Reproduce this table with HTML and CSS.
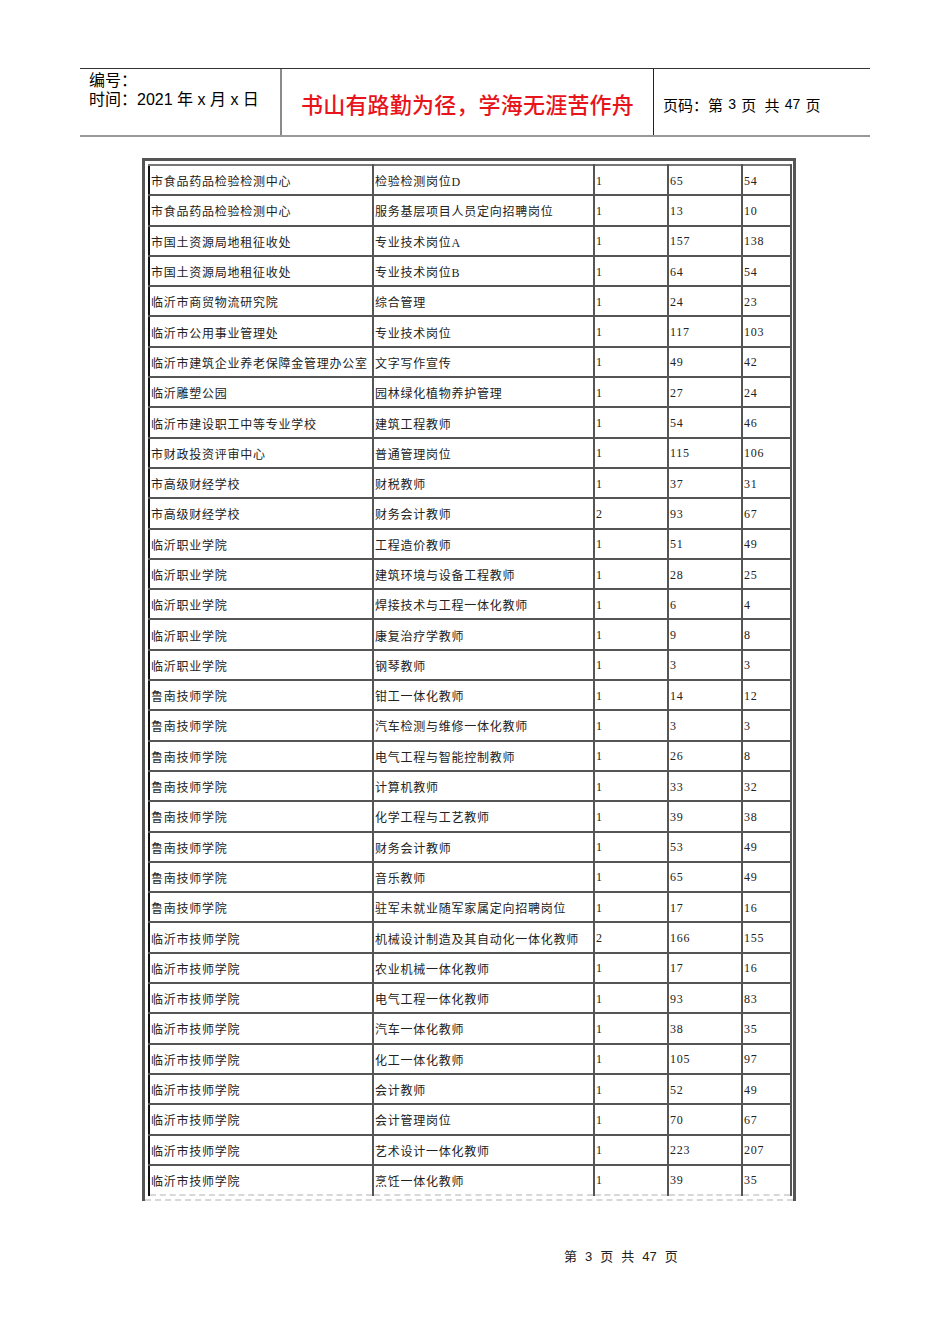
FILE: index.html
```html
<!DOCTYPE html>
<html lang="zh">
<head>
<meta charset="utf-8">
<title>第3页</title>
<link rel="stylesheet" href="styles.css">
</head>
<body>
<div class="header">
  <div class="h-left">
    <div>编号：</div>
    <div>时间：2021 年 x 月 x 日</div>
  </div>
  <div class="h-mid">书山有路勤为径，学海无涯苦作舟</div>
  <div class="h-right">页码：第 <span class="num">3</span> 页&nbsp;&nbsp;共 <span class="num">47</span> 页</div>
</div>

<div class="sheet">
  <table class="grid">
    <colgroup>
      <col class="c1"><col class="c2"><col class="c3"><col class="c4"><col class="c5">
    </colgroup>
    <tbody>
      <tr><td>市食品药品检验检测中心</td><td>检验检测岗位D</td><td>1</td><td>65</td><td>54</td></tr>
      <tr><td>市食品药品检验检测中心</td><td>服务基层项目人员定向招聘岗位</td><td>1</td><td>13</td><td>10</td></tr>
      <tr><td>市国土资源局地租征收处</td><td>专业技术岗位A</td><td>1</td><td>157</td><td>138</td></tr>
      <tr><td>市国土资源局地租征收处</td><td>专业技术岗位B</td><td>1</td><td>64</td><td>54</td></tr>
      <tr><td>临沂市商贸物流研究院</td><td>综合管理</td><td>1</td><td>24</td><td>23</td></tr>
      <tr><td>临沂市公用事业管理处</td><td>专业技术岗位</td><td>1</td><td>117</td><td>103</td></tr>
      <tr><td>临沂市建筑企业养老保障金管理办公室</td><td>文字写作宣传</td><td>1</td><td>49</td><td>42</td></tr>
      <tr><td>临沂雕塑公园</td><td>园林绿化植物养护管理</td><td>1</td><td>27</td><td>24</td></tr>
      <tr><td>临沂市建设职工中等专业学校</td><td>建筑工程教师</td><td>1</td><td>54</td><td>46</td></tr>
      <tr><td>市财政投资评审中心</td><td>普通管理岗位</td><td>1</td><td>115</td><td>106</td></tr>
      <tr><td>市高级财经学校</td><td>财税教师</td><td>1</td><td>37</td><td>31</td></tr>
      <tr><td>市高级财经学校</td><td>财务会计教师</td><td>2</td><td>93</td><td>67</td></tr>
      <tr><td>临沂职业学院</td><td>工程造价教师</td><td>1</td><td>51</td><td>49</td></tr>
      <tr><td>临沂职业学院</td><td>建筑环境与设备工程教师</td><td>1</td><td>28</td><td>25</td></tr>
      <tr><td>临沂职业学院</td><td>焊接技术与工程一体化教师</td><td>1</td><td>6</td><td>4</td></tr>
      <tr><td>临沂职业学院</td><td>康复治疗学教师</td><td>1</td><td>9</td><td>8</td></tr>
      <tr><td>临沂职业学院</td><td>钢琴教师</td><td>1</td><td>3</td><td>3</td></tr>
      <tr><td>鲁南技师学院</td><td>钳工一体化教师</td><td>1</td><td>14</td><td>12</td></tr>
      <tr><td>鲁南技师学院</td><td>汽车检测与维修一体化教师</td><td>1</td><td>3</td><td>3</td></tr>
      <tr><td>鲁南技师学院</td><td>电气工程与智能控制教师</td><td>1</td><td>26</td><td>8</td></tr>
      <tr><td>鲁南技师学院</td><td>计算机教师</td><td>1</td><td>33</td><td>32</td></tr>
      <tr><td>鲁南技师学院</td><td>化学工程与工艺教师</td><td>1</td><td>39</td><td>38</td></tr>
      <tr><td>鲁南技师学院</td><td>财务会计教师</td><td>1</td><td>53</td><td>49</td></tr>
      <tr><td>鲁南技师学院</td><td>音乐教师</td><td>1</td><td>65</td><td>49</td></tr>
      <tr><td>鲁南技师学院</td><td>驻军未就业随军家属定向招聘岗位</td><td>1</td><td>17</td><td>16</td></tr>
      <tr><td>临沂市技师学院</td><td>机械设计制造及其自动化一体化教师</td><td>2</td><td>166</td><td>155</td></tr>
      <tr><td>临沂市技师学院</td><td>农业机械一体化教师</td><td>1</td><td>17</td><td>16</td></tr>
      <tr><td>临沂市技师学院</td><td>电气工程一体化教师</td><td>1</td><td>93</td><td>83</td></tr>
      <tr><td>临沂市技师学院</td><td>汽车一体化教师</td><td>1</td><td>38</td><td>35</td></tr>
      <tr><td>临沂市技师学院</td><td>化工一体化教师</td><td>1</td><td>105</td><td>97</td></tr>
      <tr><td>临沂市技师学院</td><td>会计教师</td><td>1</td><td>52</td><td>49</td></tr>
      <tr><td>临沂市技师学院</td><td>会计管理岗位</td><td>1</td><td>70</td><td>67</td></tr>
      <tr><td>临沂市技师学院</td><td>艺术设计一体化教师</td><td>1</td><td>223</td><td>207</td></tr>
      <tr class="last"><td>临沂市技师学院</td><td>烹饪一体化教师</td><td>1</td><td>39</td><td>35</td></tr>
    </tbody>
  </table>
</div>

<div class="footer">
  <span>第</span><span class="num">3</span><span>页</span><span>共</span><span class="num">47</span><span>页</span>
</div>
</body>
</html>
```

FILE: styles.css
```css
html, body {
  margin: 0;
  padding: 0;
  background: #fff;
}

body {
  width: 950px;
  padding-top: 68px;
  color: #000;
  font-family: "Liberation Sans", "Noto Sans CJK SC", sans-serif;
}

.header {
  display: flex;
  margin-left: 80px;
  width: 790px;
  height: 66px;
  border-top: 1px solid #333;
  border-bottom: 2px solid #999;
}

.h-left {
  padding: 2px 0 0 9px;
  box-sizing: border-box;
  width: 202px;
  border-right: 2px solid #8a8a8a;
  font-size: 16px;
  line-height: 19px;
}

.h-mid {
  width: 372px;
  border-right: 1px solid #222;
  display: flex;
  align-items: center;
  justify-content: center;
  padding-top: 1px;
  box-sizing: border-box;
  color: #e8141b;
  font-size: 22px;
  font-weight: 500;
  letter-spacing: 0.2px;
}

.h-right {
  flex: 1;
  display: flex;
  align-items: center;
  padding: 4px 0 0 9px;
  font-size: 15px;
  white-space: pre;
}

.h-right .num {
  font-size: 14px;
  margin: 0 1px;
}

.sheet {
  margin: 21px 0 0 142px;
  width: 645px;
  border: 3px solid #555;
  border-bottom: none;
  padding: 3px 0 0 3px;
  height: 1037px;
  position: relative;
}

.sheet::before {
  content: "";
  position: absolute;
  left: 0;
  right: 0;
  bottom: 0;
  border-bottom: 2px dashed #d8d8d8;
}

.grid {
  border-collapse: collapse;
  table-layout: fixed;
  width: 642px;
  font-family: "Liberation Serif", "Noto Sans CJK SC", serif;
  font-size: 12px;
  color: #222;
}

.c1 { width: 224px; }
.c2 { width: 221px; }
.c3 { width: 74px; }
.c4 { width: 74px; }
.c5 { width: 49px; }

.grid tr {
  height: 30.3px;
}

.grid td {
  border: 2px solid #555;
  padding: 2px 0 0 1px;
  letter-spacing: 0.75px;
  white-space: nowrap;
  overflow: hidden;
  vertical-align: middle;
}

.grid td:first-child {
  border-left: 2px solid #111;
}

.grid tr:first-child td {
  border-top: 2px solid #777;
}

.grid tr.last td {
  border-bottom: 2px dashed #d8d8d8;
}

.footer {
  margin: 45px 0 0 564px;
  display: flex;
  gap: 8px;
  align-items: baseline;
  font-size: 13px;
  color: #222;
  font-family: "Noto Sans CJK SC", sans-serif;
}

.footer .num {
  font-family: "Liberation Sans", sans-serif;
  font-size: 13px;
}
```
